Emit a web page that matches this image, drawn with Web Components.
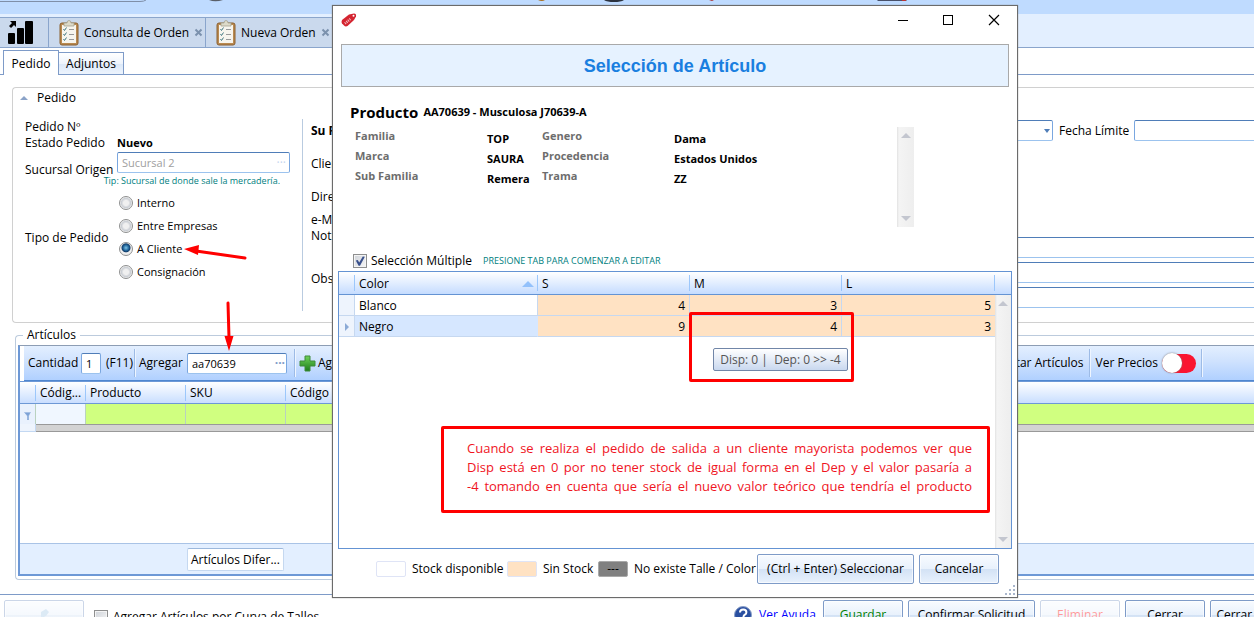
<!DOCTYPE html>
<html lang="es">
<head>
<meta charset="utf-8">
<title>Nueva Orden</title>
<style>
  html, body { margin: 0; height: 100%; overflow: hidden; background: #fff; }
  body { font: 12px/16px "Open Sans", "Noto Sans", sans-serif; color: #000; }
</style>
</head>
<body>
<order-app></order-app>
<script>
const define = (tag, html, setup) => {
  const template = document.createElement('template');
  template.innerHTML = '<style>*{box-sizing:border-box}:host{display:block;box-sizing:border-box}:host([hidden]){display:none}</style>' + html;
  customElements.define(tag, class extends HTMLElement {
    constructor() {
      super();
      this.attachShadow({ mode: 'open' }).append(template.content.cloneNode(true));
    }
    connectedCallback() { if (setup) setup(this, this.shadowRoot); }
  });
};

const fieldCss = `
  .field { font: inherit; color: inherit; height: 21px; margin: 0; padding: 0 4px; background: #fff; outline: 0;
    border: 1px solid #7aa7e0; border-top-color: #4f7db8; border-bottom-color: #9cc3ee; border-radius: 2px; }`;
const checkCss = `
  .check { appearance: none; width: 14px; height: 14px; margin: 0; border: 1px solid #8e8f8f; display: grid; place-items: center;
    background: linear-gradient(135deg, #cfd3d9, #f6f6f6); box-shadow: inset 0 0 0 1px #f4f4f4; }
  .check:checked::before { content: ""; width: 10px; height: 10px; background: #39508c;
    clip-path: polygon(8% 45%, 28% 40%, 42% 65%, 78% 4%, 98% 8%, 50% 98%, 36% 98%); }`;

/* ---------- ribbon remnant ---------- */
define('ribbon-edge', `
<style>
  :host { background: #bfdbff; height: 14px; }
  svg { display: block; }
</style>
<svg width="1254" height="14" aria-hidden="true">
  <path d="M0 1.5H140Q144 1.5 146 0" fill="none" stroke="#7f8fa8"/>
  <path d="M209 0q6 2.500 14 0z" fill="#5a5f68"/>
  <path d="M538 0h7q-3 2-7 0z" fill="#a86f1e"/>
  <path d="M604 0h20q-3 2-10 2t-10-2z" fill="#2c3340"/>
  <path d="M709 0h5l-2 1z" fill="#a33"/>
  <path d="M878 0h28l1 1h-30z" fill="#48506a"/><path d="M902 0h4v1h-4z" fill="#b33"/>
</svg>`);

/* ---------- document tabs ---------- */
define('doc-tab', `
<style>
  :host { background: #cad9ed; border-top: 1px solid #8aa5cc; border-right: 1px solid #8aa5cc; }
  .tab { height: 29px; display: flex; align-items: center; gap: 5px; padding: 0 0 0 10px; }
  :host([home]) .tab { padding: 0 14px 0 8px; gap: 0; }
  .name { white-space: nowrap; }
  button { border: 0; background: none; padding: 0; width: 9px; height: 9px; display: grid; }
  :host([home]) button, :host([home]) .name { display: none; }
</style>
<div class="tab"><slot name="icon"></slot><span class="name"><slot></slot></span>
<button aria-label="Cerrar pestaña"><svg width="9" height="9"><path d="M1.500 1.500l6 6M7.500 1.500l-6 6" stroke="#7b91ad" stroke-width="2"/></svg></button></div>`);

define('clipboard-icon', `
<style>svg{display:block}</style>
<svg width="20" height="26" viewBox="0 0 20 26" aria-hidden="true">
  <rect x="1" y="3" width="18" height="22" rx="2" fill="#b98a51" stroke="#8b6030"/>
  <rect x="3" y="5" width="14" height="18" fill="#f7f5ee"/>
  <path d="M5 3h3q0-2.500 2-2.500t2 2.500h3v3H5z" fill="#dddac9" stroke="#a5a290" stroke-width=".8"/>
  <path d="M4.500 9l1 1.500 2-3M4.500 14l1 1.500 2-3M4.500 19l1 1.500 2-3" fill="none" stroke="#427a83"/>
  <path d="M10 9.500h5M10 14.500h5M10 19.500h5" stroke="#999"/>
</svg>`);

define('doc-tabs', `
<style>
  :host { background: #e3efff; padding-top: 3px; border-bottom: 1px solid #8aa5cc; }
  .bar { display: flex; }
  .home { width: 49px; } .query { width: 157px; } .new { width: 132px; }
</style>
<nav class="bar">
  <doc-tab home class="home"><svg slot="icon" width="25" height="24" viewBox="0 0 25 24"><rect y="12" width="7" height="11" rx="1"/><rect x="9" y="7" width="7" height="16" rx="1"/><rect x="17" width="8" height="23" rx="1"/><path d="M2 0h6v6L6 4 3 7 1 5l3-3z"/></svg></doc-tab>
  <doc-tab class="query"><clipboard-icon slot="icon"></clipboard-icon>Consulta de Orden</doc-tab>
  <doc-tab class="new"><clipboard-icon slot="icon"></clipboard-icon>Nueva Orden</doc-tab>
</nav>`);

define('page-tabs', `
<style>
  :host { border-bottom: 1px solid #7e9bc8; padding: 2px 0 0 3px; }
  .bar { display: flex; align-items: flex-end; height: 24px; }
  button { font: inherit; color: inherit; border: 1px solid #7e9bc8; border-bottom: 0; margin: 0; padding: 1px 0 0; height: 22px; width: 66px;
    background: linear-gradient(#fff, #eef4fc 50%, #dbe8f8 50%, #edf4fd); }
  button[aria-selected=true] { height: 25px; width: 56px; background: #fff; margin: 0 -1px -1px 0; z-index: 1; }
</style>
<div class="bar" role="tablist"><button role="tab" aria-selected="true">Pedido</button><button role="tab" aria-selected="false">Adjuntos</button></div>`);

/* ---------- order form ---------- */
define('order-type', `
<style>
  fieldset { border: 0; margin: 0; padding: 0; display: grid; gap: 7px; }
  label { display: flex; align-items: center; gap: 4px; font-size: 11px; }
  input { appearance: none; width: 14px; height: 14px; margin: 0 0 0 2px; border-radius: 50%; border: 1px solid #8e8f8f;
    background: radial-gradient(circle, #f0f0f0 30%, #c9cdd3 55%, #f4f4f4 70%); }
  input:checked { background: radial-gradient(circle at 50% 40%, #7cc4e8 0, #1d5f94 3px, #143f6c 4px, #eee 5px); }
</style>
<fieldset aria-label="Tipo de Pedido">
  <label><input type="radio" name="t">Interno</label>
  <label><input type="radio" name="t">Entre Empresas</label>
  <label><input type="radio" name="t" checked>A Cliente</label>
  <label><input type="radio" name="t">Consignación</label>
</fieldset>`);

define('order-form', `
<style>
  ${fieldCss}
  :host { margin: 12px 0 0 12px; border: 1px solid #d0d0d0; border-right: 0; border-radius: 4px 0 0 4px; height: 236px; }
  header { display: flex; align-items: center; gap: 9px; padding: 1px 0 0 7px; height: 19px; }
  header i { border: 4px solid transparent; border-top: 0; border-bottom-color: #8ba3c8; }
  .body { display: flex; padding: 12px 0 0 12px; }
  .left { flex: none; display: grid; grid-template-columns: 92px 174px; align-content: start; width: 278px; border-right: 1px solid #b9cbe0; height: 192px; white-space: nowrap; }
  .left > * { align-self: center; grid-column: 1; }
  .left b { font-size: 11px; grid-area: 2 / 2; }
  .state { grid-row: 2; }
  .src { grid-row: 3 / 5; }
  .left .origin { display: grid; padding-top: 1px; grid-area: 3 / 2; }
  .origin > * { grid-area: 1/1; }
  .origin .field { width: 173px; color: #a0a0a0; font-size: 11px; }
  .origin .more { justify-self: end; align-self: center; padding: 0 5px; color: #c6d6ee; }
  .left .tip { grid-area: 4 / 1 / 5 / 3; justify-self: end; font-size: 9px; line-height: 16px; color: #008080; padding-right: 11px; }
  .type { margin-top: 6px; grid-row: 5; }
  .left order-type { grid-column: 2; }
  .right { flex: 1; min-width: 0; display: grid; grid-template-columns: 110px 1fr; padding-left: 8px; }
  .labels { display: flex; flex-direction: column; gap: 17px; padding-top: 4px; }
  .mail { margin-top: -10px; } .obs { margin-top: 10px; }
  .fields { display: flex; flex-direction: column; gap: 4px; padding-top: 1px; min-width: 0; }
  .dates { display: flex; align-items: center; gap: 6px; margin-bottom: 92px; }
  select.field { appearance: none; }
  .dates .end { flex: 1; min-width: 0; }
  .pick { display: grid; flex: none; width: 632px; align-items: center; }
  .pick > * { grid-area: 1/1; } .pick i { justify-self: end; margin-right: 3px; border: 3px solid transparent; border-bottom: 0; border-top: 4px solid #4f7db8; }
  .dates label { flex: none; width: 69px; white-space: nowrap; }
  .fields .open { border-right: 0; border-radius: 2px 0 0 2px; }
</style>
<header><i></i>Pedido</header>
<div class="body">
  <div class="left">
    <span>Pedido Nº</span>
    <span class="state">Estado Pedido</span><b>Nuevo</b>
    <label for="suc" class="src">Sucursal Origen</label>
    <div class="origin"><input class="field" id="suc" value="Sucursal 2" disabled><span class="more">···</span></div>
    <span class="tip">Tip: Sucursal de donde sale la mercadería.</span>
    <span class="type">Tipo de Pedido</span><order-type class="type"></order-type>
  </div>
  <div class="right">
    <div class="labels">
      <b><label for="fecha">Su Fecha</label></b><span>Cliente</span><span>Dirección</span>
      <label for="mail" class="mail">e-Mail<br>Notificación</label>
      <label for="obs" class="obs">Observaciones</label>
    </div>
    <div class="fields">
      <div class="dates"><span class="pick"><select class="field" id="fecha"><option></option></select><i></i></span>
        <label for="lim">Fecha Límite</label><input class="field open end" id="lim"></div>
      <input class="field open" id="mail"><input class="field open" id="obs"><input class="field open" aria-label="Observaciones adicionales">
    </div>
  </div>
</div>`);

/* ---------- articles ---------- */
define('articles-toolbar', `
<style>
  ${fieldCss}
  :host { margin-left: 4px; background: linear-gradient(#e3efff, #cfe2fe 45%, #b0d0ff); border-bottom: 1px solid #4f86cf; }
  .bar { display: flex; align-items: center; height: 34px; padding-left: 4px; white-space: nowrap; }
  .field { font-size: 11px; }
  .qty { width: 20px; margin: 0 5px 0 4px; }
  hr { width: 1px; height: 28px; margin: 0 4px 0 3px; border: 0; background: #9dbbe6; box-shadow: 1px 0 #eef5ff; flex: none; }
  .qtyl { width: 49px; } .f11 { width: 25px; } .agl { width: 48px; }
  .code { display: grid; align-items: center; width: 100px; margin-right: 4px; } .code > * { grid-area: 1/1; min-width: 0; }
  .code i { justify-self: end; font-style: normal; padding-right: 2px; color: #7e9bc8; font-weight: 700; }
  button { font: inherit; color: inherit; background: none; border: 0; padding: 0; display: flex; align-items: center; gap: 2px; }
  .end { margin-left: auto; margin-right: 48px; display: flex; align-items: center; gap: 2px; }
  .sw { display: flex; align-items: center; gap: 4px; }
  .sw input { appearance: none; margin: 0; width: 34px; height: 19px; border-radius: 10px; background: #fa1530; display: flex; align-items: center; }
  .sw input::before { content: ""; width: 20px; height: 20px; border-radius: 50%; background: #fff; box-shadow: 0 0 2px #777; }
</style>
<div class="bar">
  <label for="q" class="qtyl">Cantidad</label><input id="q" class="field qty" value="1"><span class="f11">(F11)</span><hr>
  <label for="a" class="agl">Agregar</label><span class="code"><input id="a" class="field" value="aa70639"><i>···</i></span><hr>
  <button><svg width="17" height="17" viewBox="0 0 17 17"><defs><linearGradient id="g" x2="0" y2="1"><stop stop-color="#6fd35a"/><stop offset="1" stop-color="#1c7c1a"/></linearGradient></defs><path d="M6 1h5v5h5v5h-5v5H6v-5H1V6h5z" fill="url(#g)" stroke="#3e8a3a"/></svg>Agregar</button>
  <div class="end"><button>Importar Artículos</button><hr><label class="sw">Ver Precios<input type="checkbox" role="switch"></label><hr></div>
</div>`);

define('articles-table', `
<style>
  table { border-collapse: separate; border-spacing: 0; table-layout: fixed; width: 100%; }
  th { font-weight: 400; text-align: left; height: 23px; padding: 0 0 0 4px; border-bottom: 1px solid #6d98d6; white-space: nowrap; overflow: hidden;
    background: linear-gradient(#9cc7fb, #9cc7fb) right 50%/1px 16px no-repeat, linear-gradient(#fff, #c9deff); border-top: 1px solid #6d98d6; }
  th:last-child { background: linear-gradient(#fff, #c9deff); }
  td { height: 20px; padding: 0; background: #d0ff80; border-right: 1px solid #b9d2c0; }
  td:last-child { border: 0; } .a { background: #e9f1fd; } .b { background: #f0f7ff; }
  .gap td { height: 8px; background: #d3d3d3; border: solid #999; border-width: 1px 0; } .gap .a { border: solid #c3d8f2; border-width: 0 1px 1px 0; background: #eef4fd; }
  svg { display: block; margin: 4px auto 0; }
</style>
<table>
  <colgroup><col style="width:16px"><col style="width:50px"><col style="width:100px"><col style="width:100px"><col></colgroup>
  <thead><tr><th></th><th>Códig...</th><th>Producto</th><th>SKU</th><th>Código Barras</th></tr></thead>
  <tbody><tr><td class="a"><svg width="7" height="8"><path d="M0 .5h7M1 1l2.500 3v4h1V4L6 1z" fill="#7ea3d6" stroke="#7ea3d6" stroke-width=".5"/></svg></td><td class="b"></td><td></td><td></td><td></td></tr>
  <tr class="gap"><td class="a"></td><td colspan="4"></td></tr></tbody>
</table>`);

define('articles-panel', `
<style>
  fieldset { margin: 4px 0 0 15px; padding: 2px 0 3px 2px; border: 1px solid #bccbdd; border-right: 0; border-radius: 4px 0 0 4px; min-width: 0; }
  legend { margin-left: 5px; padding: 0 4px; line-height: 16px; }
  .panel { border: solid #8d9db4; border-width: 1px 0 2px 2px; border-left-color: #6d98d6; border-bottom-color: #6d98d6; }
  .blank { height: 111px; }
  footer { background: #e3efff; border-top: 1px solid #a9c3e6; height: 31px; padding: 4px 0 0 167px; }
  output { display: block; width: 97px; height: 23px; line-height: 21px; padding-left: 3px; background: #fff; border: 1px solid #c5d8f0; border-top-color: #9cb8dc; border-radius: 2px; }
</style>
<fieldset><legend>Artículos</legend>
  <div class="panel"><articles-toolbar></articles-toolbar><articles-table></articles-table><div class="blank"></div>
  <footer><output>Artículos Difer...</output></footer></div>
</fieldset>`);

/* ---------- buttons ---------- */
define('form-button', `
<style>
  :host { flex: none; }
  button { font: inherit; color: inherit; width: 100%; height: 30px; padding: 0; border: 1px solid #7e9bc8; border-radius: 2px; white-space: nowrap;
    display: grid; place-items: center; background: linear-gradient(#f8fbff, #e8f1fc 50%, #d3e2f5 51%, #e9f2fd); box-shadow: inset 0 0 0 1px #ffffffa0; }
  :host([disabled]) button { opacity: .4; }
</style>
<button><slot></slot></button>`, (host, root) => { root.querySelector('button').disabled = host.hasAttribute('disabled'); });

define('action-bar', `
<style>
  ${checkCss}
  :host { margin-top: 14px; border-top: 1px solid #7e9bc8; padding-top: 5px; }
  .bar { display: flex; gap: 6px; padding-left: 4px; }
  .w { width: 80px; } .conf { width: 127px; } .ok { color: #008000; } .del { color: #f00; }
  label { display: flex; align-items: center; gap: 5px; padding: 4px 0 0 4px; white-space: nowrap; }
  .end { margin-left: auto; margin-right: -36px; display: flex; gap: 5px; }
  a { display: flex; align-items: center; gap: 7px; color: #00f; text-decoration: none; width: 84px; white-space: nowrap; }
</style>
<div class="bar">
  <form-button class="w" disabled><svg width="24" height="24" viewBox="0 0 24 24"><path d="M9 9l5-3 3 3-3 4-5 1zM7 16l5-3 3 3-3 5-5 2z" fill="#a9cbe8"/></svg></form-button>
  <label><input class="check" type="checkbox">Agregar Artículos por Curva de Talles</label>
  <div class="end">
    <a href="#ayuda"><svg width="18" height="18" viewBox="0 0 18 18"><circle cx="9" cy="9" r="8.500" fill="#2a4fa0" stroke="#8ba0c8"/><path d="M6 6.500q0-3 3.200-3t3.200 2.700q0 1.600-1.500 2.500T9.400 11.500" fill="none" stroke="#fff" stroke-width="2"/><circle cx="9.300" cy="14" r="1.200" fill="#fff"/></svg>Ver Ayuda</a>
    <form-button class="w ok">Guardar</form-button>
    <form-button class="conf">Confirmar Solicitud</form-button>
    <form-button class="w del" disabled>Eliminar</form-button>
    <form-button class="w">Cerrar</form-button>
    <form-button class="w">Cerrar Todo</form-button>
  </div>
</div>`);

/* ---------- selection dialog ---------- */
define('scroll-track', `
<style>
  :host { width: 17px; background: linear-gradient(90deg, #e2e2e2, #f4f4f4 2px, #eee); }
  .t { display: flex; flex-direction: column; justify-content: space-between; align-items: center; height: 100%; padding: 6px 0; }
  i { border: 5px solid transparent; } .u { border-top: 0; border-bottom-color: #c3c6cf; } .d { border-bottom: 0; border-top-color: #c3c6cf; }
</style>
<div class="t"><i class="u"></i><i class="d"></i></div>`);

define('product-info', `
<style>
  :host { padding: 16px 0 0 17px; }
  h2 { margin: 0; display: flex; align-items: center; gap: 5px; font-size: 15px; line-height: 18px; }
  h2 span { font-size: 11px; }
  .row { display: flex; margin-top: 6px; }
  dl { margin: 0 0 0 5px; display: grid; grid-template-columns: 132px 55px 132px 223px; grid-auto-rows: 20px; align-content: start; font-size: 11px; line-height: 18px; font-weight: 700; white-space: nowrap; }
  dt { color: #6d6d6d; } dd { margin: 3px 0 0; }
  scroll-track { height: 100px; }
</style>
<h2>Producto<span>AA70639 - Musculosa J70639-A</span></h2>
<div class="row"><dl>
  <dt>Familia</dt><dd>TOP</dd><dt>Genero</dt><dd>Dama</dd>
  <dt>Marca</dt><dd>SAURA</dd><dt>Procedencia</dt><dd>Estados Unidos</dd>
  <dt>Sub Familia</dt><dd>Remera</dd><dt>Trama</dt><dd>ZZ</dd></dl>
  <scroll-track></scroll-track></div>`);

define('stock-grid', `
<style>
  :host { border: 1px solid #6493d3; height: 278px; margin: 2px 5px 0; }
  .wrap { display: grid; grid-template-columns: 1fr 16px; grid-template-rows: 23px 1fr; height: 100%; }
  table { grid-area: 1/1/3/2; align-self: start; border-collapse: separate; border-spacing: 0; table-layout: fixed; width: 100%; }
  .cap { grid-area: 1/2; background: linear-gradient(#fff, #c5dcff); border-bottom: 1px solid #6493d3; }
  th { height: 23px; padding: 2px 4px 0; font-weight: 400; text-align: left; border-bottom: 1px solid #6493d3;
    background: linear-gradient(#9cc7fb, #9cc7fb) right 50%/1px 16px no-repeat, linear-gradient(#fff, #c5dcff); }
  th .s { display: flex; justify-content: space-between; align-items: center; }
  th i { border: 6px solid transparent; border-top: 0; border-bottom-color: #93c1fb; }
  td { height: 21px; padding: 2px 4px 0; border-bottom: 1px solid #c6d8f0; border-right: 1px solid #c6d8f0; background: #ffe2c3; text-align: right; }
  td:last-child { border-right: 0; } .h { background: #eef4fd; } .c { text-align: left; background: #fff; } .sel { background: #d6e7ff; border-right-color: #d6e7ff; }
  b { display: block; width: 0; margin: auto; border: 4px solid transparent; border-right: 0; border-left-color: #8baad6; }
  scroll-track { grid-area: 2/2; width: 16px; }
</style>
<div class="wrap">
<table>
  <colgroup><col style="width:16px"><col style="width:183px"><col style="width:152px"><col style="width:152px"><col></colgroup>
  <thead><tr><th></th><th><span class="s">Color<i></i></span></th><th>S</th><th>M</th><th>L</th></tr></thead>
  <tbody>
  <tr><td class="h"></td><td class="c">Blanco</td><td>4</td><td>3</td><td>5</td></tr>
  <tr><td class="h"><b></b></td><td class="c sel">Negro</td><td>9</td><td>4</td><td>3</td></tr></tbody>
</table><div class="cap"></div><scroll-track></scroll-track></div>`);

define('stock-legend', `
<style>
  :host { padding: 5px 18px 0 43px; }
  .bar { display: flex; align-items: center; white-space: nowrap; }
  .i { display: flex; align-items: center; gap: 6px; flex: none; }
  .a { width: 131px; } .b { width: 91px; } .c { width: 159px; }
  i { flex: none; font-style: normal; width: 30px; height: 16px; border: 1px solid #dfe4f6; border-radius: 2px; background: #fff; text-align: center; line-height: 14px; }
  .b i { background: #ffe2c3; } .c i { background: #808080; border-color: #a9a9a9; }
  .ok { width: 157px; margin-right: 5px; } .no { width: 80px; }
</style>
<div class="bar"><span class="i a"><i></i>Stock disponible</span><span class="i b"><i></i>Sin Stock</span><span class="i c"><i>---</i>No existe Talle / Color</span>
<form-button class="ok">(Ctrl + Enter) Seleccionar</form-button><form-button class="no">Cancelar</form-button></div>`);

define('title-bar', `
<style>
  .bar { display: flex; justify-content: space-between; padding: 6px 17px 0 8px; height: 38px; align-items: flex-start; }
  .w { display: flex; gap: 33px; padding: 2px 0 0; }
  button { border: 0; background: none; padding: 0; display: grid; }
</style>
<div class="bar"><svg width="16" height="16" viewBox="0 0 16 16"><path d="M1 8L8 2.500 13 1.500q2.500 0 2 3L13 8 6.500 14q-2 1-3.500-.5L1 11.500Q0 10 1 8z" fill="#d42430"/><path d="M4 11.500l6-5" stroke="#f3bcc0" stroke-width="2.500" stroke-dasharray="1 1"/><circle cx="12.500" cy="3.800" r="1" fill="#fff"/></svg>
<div class="w">
  <button aria-label="Minimizar"><svg width="12" height="12"><path d="M0 6.500h10" stroke="#000"/></svg></button>
  <button aria-label="Maximizar"><svg width="12" height="12"><rect x=".5" y="1.500" width="9" height="9" fill="none" stroke="#000"/></svg></button>
  <button aria-label="Cerrar"><svg width="12" height="12"><path d="M1 1l10 10M11 1L1 11" stroke="#000" stroke-width="1.200"/></svg></button>
</div></div>`);

define('article-dialog', `
<style>
  ${checkCss}
  :host { background: #fff; border: 1px solid #6b6b6b; box-shadow: 0 0 1px #888; }
  h1 { margin: 0 8px; height: 43px; line-height: 43px; text-align: center; font-family: "Liberation Sans", Arial, sans-serif; font-size: 18px; color: #1a7fe0; background: #e6f2ff; border: 1px solid #a9a9a9; }
  .multi { display: flex; align-items: center; padding: 26px 0 0 20px; }
  .multi label { display: flex; align-items: center; gap: 4px; width: 130px; white-space: nowrap; }
  small { font-size: 9px; color: #008080; }
  .grip { display: block; margin-left: auto; }
  .mark { position: absolute; border: 3px solid #f00; border-radius: 2px; }
  .cell { left: 356px; top: 306px; width: 165px; height: 70px; }
  .tip { position: absolute; left: 380px; top: 342px; width: 135px; height: 23px; line-height: 21px; text-align: center; border: 1px solid #7186a8; border-radius: 2px; color: #555; background: linear-gradient(#fff, #c9d8ef); white-space: pre; }
  .note { left: 108px; top: 420px; width: 549px; height: 87px; padding: 10px 15px 0 23px; color: #f0141e; font-size: 13px; line-height: 19px; }
  .note p { margin: 0; text-align: justify; text-align-last: justify; white-space: nowrap; }
</style>
<title-bar></title-bar>
<h1>Selección de Artículo</h1>
<product-info></product-info>
<div class="multi"><label><input class="check" type="checkbox" checked>Selección Múltiple</label><small>PRESIONE TAB PARA COMENZAR A EDITAR</small></div>
<stock-grid></stock-grid>
<stock-legend></stock-legend>
<svg class="grip" width="13" height="13" aria-hidden="true"><g fill="#a9b6cc"><path d="M9 1h2v2H9zM9 5h2v2H9zM9 9h2v2H9zM5 5h2v2H5zM5 9h2v2H5zM1 9h2v2H1z"/></g></svg>
<div class="tip" role="tooltip">Disp: 0 |  Dep: 0 &gt;&gt; -4</div>
<div class="mark cell"></div>
<div class="mark note"><p>Cuando se realiza el pedido de salida a un cliente mayorista podemos ver que</p><p>Disp está en 0 por no tener stock de igual forma en el Dep y el valor pasaría a</p><p>-4 tomando en cuenta que sería el nuevo valor teórico que tendría el producto</p></div>`);

define('note-arrows', `
<svg width="300" height="360" aria-hidden="true" style="display:block"><g stroke="#f00" stroke-width="3" stroke-linecap="round" fill="#f00">
<path d="M245 258L196 251M228 303l1 35"/><path stroke="none" d="M184 249l15-4-1 10zM229 351l-4.500-15h9z"/></g></svg>`);

define('order-app', `
<style>
  :host { position: relative; height: 100%; overflow: hidden; }
  article-dialog { position: absolute; left: 332px; top: 5px; width: 686px; }
  note-arrows { position: absolute; left: 0; top: 0; pointer-events: none; }
</style>
<ribbon-edge></ribbon-edge><doc-tabs></doc-tabs><page-tabs></page-tabs>
<order-form></order-form><articles-panel></articles-panel><action-bar></action-bar>
<note-arrows></note-arrows>
<article-dialog role="dialog" aria-label="Selección de Artículo"></article-dialog>`);
</script>
</body>
</html>
